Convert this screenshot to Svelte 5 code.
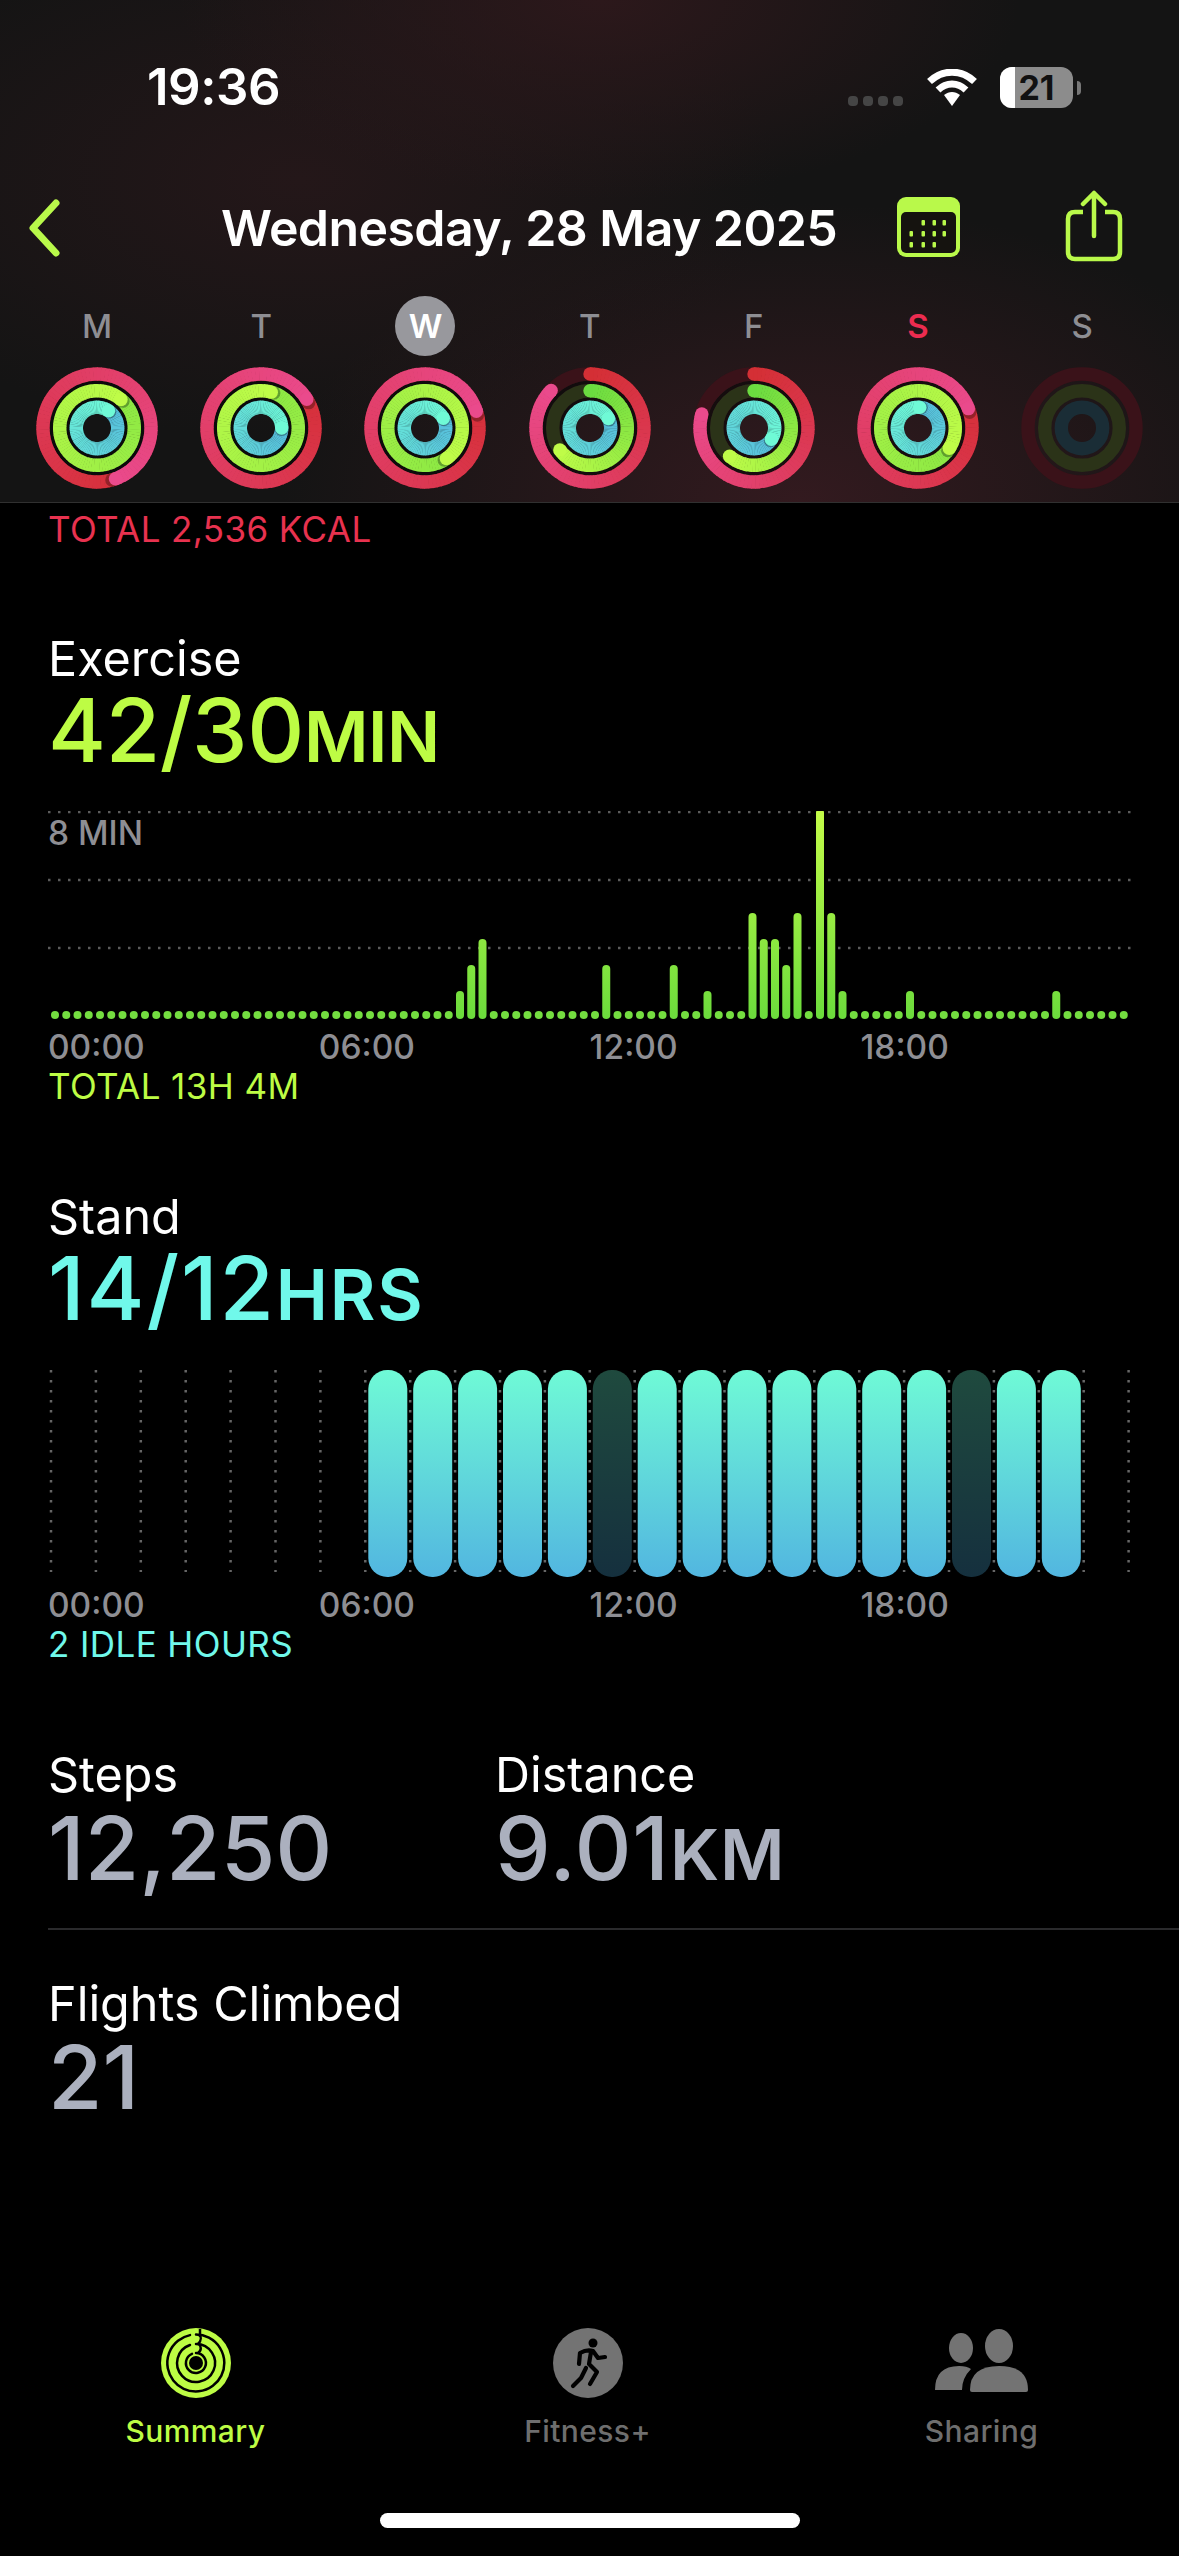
<script>
  const days = [
    { l: "M", rings: [520, 400, 394] },
    { l: "T", rings: [418, 376, 450] },
    { l: "W", rings: [432, 505, 422], today: true },
    { l: "T", rings: [314, 234, 423] },
    { l: "F", rings: [285, 221, 483] },
    { l: "S", rings: [429, 483, 365], red: true },
    { l: "S", rings: [0, 0, 0] },
  ];

  const ringDefs = [
    { r: 54, track: "#3a1219", from: [212, 47, 53], over: [214, 48, 58], to: [234, 74, 140] },
    { r: 37.3, track: "#2b3318", from: [107, 219, 64], over: [140, 232, 68], to: [191, 252, 72] },
    { r: 20.7, track: "#1a2d36", from: [86, 188, 220], over: [86, 188, 220], to: [111, 250, 214] },
  ];

  function pt(r, deg) {
    const a = ((deg - 90) * Math.PI) / 180;
    return [(r * Math.cos(a)).toFixed(2), (r * Math.sin(a)).toFixed(2)];
  }

  function mix(a, b, t) {
    return `rgb(${a.map((v, i) => Math.round(v + (b[i] - v) * t)).join(",")})`;
  }

  // angular gradient: short arcs over the last 360 degrees before the head
  function segments(def, head) {
    if (!head) return [];
    const span = Math.min(head, 360);
    const start = head - span;
    const from = head > 360 ? def.over : def.from;
    const out = [];
    const n = Math.ceil(span / 4);
    for (let i = 0; i < n; i++) {
      const a0 = start + (span * i) / n;
      const a1 = start + (span * (i + 1)) / n + (i < n - 1 ? 0.6 : 0);
      const [x0, y0] = pt(def.r, a0);
      const [x1, y1] = pt(def.r, a1);
      out.push({ d: `M${x0} ${y0}A${def.r} ${def.r} 0 0 1 ${x1} ${y1}`, c: mix(from, def.to, i / n) });
    }
    return out;
  }

  const hours = ["00:00", "06:00", "12:00", "18:00"];

  const exerciseLevels = { 36: 1, 37: 2, 38: 3, 49: 2, 55: 2, 58: 1, 62: 4, 63: 3, 64: 3, 65: 2, 66: 4, 68: 8, 69: 4, 70: 1, 76: 1, 89: 1 };
  const exercise = Array.from({ length: 96 }, (_, i) => exerciseLevels[i] || 0);

  const idle = [12, 20];
  const standLines = Array.from({ length: 25 }, (_, i) => i);
  const standHours = Array.from({ length: 16 }, (_, i) => i + 7);
  const calDots = [[26, 23], [37, 23], [47, 23], [14, 34], [26, 34], [37, 34], [47, 34], [14, 45], [26, 45], [37, 45]];
</script>

<div class="phone">
  <header class="top">
    <div class="status">
      <span class="time">19:36</span>
      <div class="status-right">
        <div class="signal"><i></i><i></i><i></i><i></i></div>
        <svg class="wifi" viewBox="0 0 50 38" width="50" height="38">
          <path d="M2.5 12.5C15.5 0 34.5 0 47.5 12.5" fill="none" stroke="#fff" stroke-width="7" />
          <path d="M11 21C19.500 13 30.500 13 39 21" fill="none" stroke="#fff" stroke-width="7" />
          <path d="M17 26C22 22 28 22 33 26L25 37Z" fill="#fff" />
        </svg>
        <div class="battery"><span class="fill"></span><span class="level">21</span></div>
        <span class="nub"></span>
      </div>
    </div>

    <nav class="nav">
      <svg class="back" viewBox="0 0 34 58" width="34" height="58">
        <path d="M29 4L6 29L29 54" fill="none" stroke="#b9f94a" stroke-width="7" stroke-linecap="round" stroke-linejoin="round" />
      </svg>
      <h1>Wednesday, 28 May 2025</h1>
      <svg class="cal" viewBox="0 0 63 60" width="63" height="60">
        <rect x="0" y="0" width="63" height="60" rx="9" fill="#b9f94a" />
        <rect x="4" y="15" width="55" height="41" rx="5" fill="#15130f" />
        {#each calDots as d}
          <rect x={d[0] - 1.500} y={d[1]} width="3.500" height="5.500" rx="1" fill="#b9f94a" />
        {/each}
      </svg>
      <svg class="share" viewBox="0 0 58 72" width="58" height="72">
        <path d="M18 22H10Q3 22 3 29V62Q3 69 10 69H48Q55 69 55 62V29Q55 22 48 22H40" fill="none" stroke="#b9f94a" stroke-width="4.500" />
        <path d="M29 46V3M18 14L29 3L40 14" fill="none" stroke="#b9f94a" stroke-width="4.500" stroke-linecap="round" stroke-linejoin="round" />
      </svg>
    </nav>

    <div class="week">
      {#each days as day}
        <div class="day">
          <span class="letter" class:today={day.today} class:red={day.red}>{day.l}</span>
          <svg viewBox="-62 -62 124 124" width="124" height="124">
            {#if day.rings[0]}
              <circle r="45.600" fill="none" stroke="#000" stroke-opacity="0.45" stroke-width="3.400" />
              <circle r="29" fill="none" stroke="#000" stroke-opacity="0.45" stroke-width="3.400" />
            {/if}
            {#each ringDefs as def, i}
              <circle r={def.r} fill="none" stroke={def.track} stroke-width="13.400" />
              {#if day.rings[i]}
                {@const segs = segments(def, day.rings[i])}
                {@const head = day.rings[i]}
                {#if head < 360}
                  <circle cx={pt(def.r, 0)[0]} cy={pt(def.r, 0)[1]} r="6.700" fill={mix(def.from, def.to, 0)} />
                {/if}
                {#each segs.slice(0, -5) as s}
                  <path d={s.d} fill="none" stroke={s.c} stroke-width="13.400" />
                {/each}
                {#if head >= 360}
                  <circle cx={pt(def.r, head + 4)[0]} cy={pt(def.r, head + 4)[1]} r="6.700" fill="#000" opacity="0.3" />
                {/if}
                {#each segs.slice(-5) as s}
                  <path d={s.d} fill="none" stroke={s.c} stroke-width="13.400" />
                {/each}
                <circle cx={pt(def.r, head)[0]} cy={pt(def.r, head)[1]} r="6.700" fill={mix(def.from, def.to, 1)} />
              {/if}
            {/each}
          </svg>
        </div>
      {/each}
    </div>
  </header>

  <main class="content">
    <p class="total kcal">TOTAL 2,536 KCAL</p>

    <section class="metric exercise">
      <h2>Exercise</h2>
      <div class="value green">42/30<small>MIN</small></div>
      <div class="chart">
        <svg class="plot" viewBox="0 0 1179 216" width="1179" height="216">
          <defs>
            <linearGradient id="exGrad" gradientUnits="userSpaceOnUse" x1="0" y1="0" x2="0" y2="208">
              <stop offset="0" stop-color="#c4fc48" />
              <stop offset="1" stop-color="#6bdb3c" />
            </linearGradient>
          </defs>
          {#each [1, 69, 137] as y}
            <line x1="48" x2="1132" y1={y} y2={y} stroke="#5c5c5c" stroke-width="2.500" stroke-dasharray="2.500 7.500" />
          {/each}
          {#each exercise as v, i}
            {#if v}
              <rect x={55 + i * 11.25 - 4} y={208 - 26 * v - 2} width="8" height={26 * v + 2} rx="4" fill="url(#exGrad)" />
            {:else}
              <circle cx={55 + i * 11.25} cy="204" r="4" fill="#74dd40" />
            {/if}
          {/each}
        </svg>
        <span class="axis-note">8 MIN</span>
      </div>
      <div class="hours">
        {#each hours as h}<span>{h}</span>{/each}
      </div>
      <p class="total lime">TOTAL 13H 4M</p>
    </section>

    <section class="metric stand">
      <h2>Stand</h2>
      <div class="value cyan">14/12<small>HRS</small></div>
      <div class="stand-chart">
        <svg viewBox="0 0 1179 208" width="1179" height="208">
          <defs>
            <linearGradient id="onGrad" x1="0" y1="0" x2="0" y2="1">
              <stop offset="0" stop-color="#6ffad6" />
              <stop offset="1" stop-color="#52b6e0" />
            </linearGradient>
            <linearGradient id="offGrad" x1="0" y1="0" x2="0" y2="1">
              <stop offset="0" stop-color="#1f4a3e" />
              <stop offset="1" stop-color="#15303e" />
            </linearGradient>
          </defs>
          {#each standLines as n}
            <line x1={51 + n * 44.9} x2={51 + n * 44.9} y1="0" y2="202" stroke="#666" stroke-width="2.500" stroke-dasharray="2.500 7.500" />
          {/each}
          {#each standHours as h}
            <rect x={51 + h * 44.9 + 3} y="0" width="39" height="207" rx="19" fill={idle.includes(h) ? "url(#offGrad)" : "url(#onGrad)"} />
          {/each}
        </svg>
      </div>
      <div class="hours">
        {#each hours as h}<span>{h}</span>{/each}
      </div>
      <p class="total aqua">2 IDLE HOURS</p>
    </section>

    <section class="stats">
      <div class="stat-row">
        <div class="stat">
          <h2>Steps</h2>
          <div class="value grey">12,250</div>
        </div>
        <div class="stat">
          <h2>Distance</h2>
          <div class="value grey dist">9.01<small>KM</small></div>
        </div>
      </div>
      <div class="stat flights">
        <h2>Flights Climbed</h2>
        <div class="value grey">21</div>
      </div>
    </section>
  </main>

  <footer class="tabbar">
    <div class="tabs">
      <div class="tab active">
        <svg viewBox="-35 -35 70 70" width="70" height="70">
          <circle r="35" fill="#bdfc44" />
          <path d="M0 -28.500A28.500 28.500 0 1 1 -6 -27.900" fill="none" stroke="#000" stroke-width="2.500" stroke-linecap="round" />
          <path d="M4 -26V-34" stroke="#000" stroke-width="2.500" />
          <path d="M0 -19A19 19 0 1 1 -6 -18" fill="none" stroke="#000" stroke-width="2.500" stroke-linecap="round" />
          <path d="M2 -19C6 -23 5 -27 3 -29" fill="none" stroke="#000" stroke-width="2.500" />
          <path d="M0 -10A10 10 0 1 1 -4 -9.200" fill="none" stroke="#000" stroke-width="2.500" stroke-linecap="round" />
          <path d="M2 -10C6 -13 5 -17 3 -19" fill="none" stroke="#000" stroke-width="2.500" />
          <circle r="7" fill="#000" />
        </svg>
        <span>Summary</span>
      </div>
      <div class="tab">
        <svg viewBox="-35 -35 70 70" width="70" height="70">
          <circle r="35" fill="#737373" />
          <circle cx="5" cy="-20" r="4.500" fill="#000" />
          <path d="M-9 1L-8 -10Q-1 -14 5 -12L10 -5L17 -6M3 -11L1 1L9 9L2 21M-2 5L-7 15L-15 23" fill="none" stroke="#000" stroke-width="4.200" stroke-linecap="round" stroke-linejoin="round" />
        </svg>
        <span>Fitness+</span>
      </div>
      <div class="tab">
        <svg class="people" viewBox="0 0 94 70" width="94" height="70">
          <ellipse cx="26" cy="20" rx="12" ry="15" fill="#737373" />
          <ellipse cx="64" cy="18" rx="14" ry="17" fill="#737373" />
          <path d="M0 62Q0 38 24 38Q32 38 36 41Q27 50 27 62Z" fill="#737373" />
          <path d="M35 62Q35 38 64 38Q93 38 93 62Q93 64 91 64H37Q35 64 35 62Z" fill="#737373" />
        </svg>
        <span>Sharing</span>
      </div>
    </div>
    <div class="home"></div>
  </footer>
</div>

<style>
  :global(body) {
    margin: 0;
    background: #000;
  }

  .phone {
    width: 1179px;
    height: 2556px;
    display: flex;
    flex-direction: column;
    overflow: hidden;
    background: #000;
    color: #fff;
    font-family: Inter, "Liberation Sans", sans-serif;
  }

  .top {
    height: 503px;
    flex: none;
    box-sizing: border-box;
    border-bottom: 1px solid #303030;
    background:
      radial-gradient(ellipse 420px 200px at 600px 0, #2c181b, transparent),
      radial-gradient(ellipse 480px 260px at 300px 180px, #241719, transparent),
      radial-gradient(ellipse 520px 300px at 800px 503px, #331a1f, transparent),
      #141414;
  }

  .status {
    height: 183px;
    display: flex;
    justify-content: space-between;
    align-items: flex-start;
    padding: 0 98px 0 147px;
  }

  .time {
    margin-top: 57px;
    font-size: 51px;
    line-height: 60px;
    font-weight: 600;
    letter-spacing: -0.5px;
  }

  .status-right {
    display: flex;
    align-items: flex-start;
    margin-top: 67px;
  }

  .signal {
    display: flex;
    gap: 5px;
    margin: 29px 24px 0 0;
  }

  .signal i {
    width: 10px;
    height: 10px;
    border-radius: 4px;
    background: #454545;
  }

  .wifi {
    margin: 2px 23px 0 0;
  }

  .battery {
    position: relative;
    width: 73px;
    height: 41px;
    border-radius: 12px;
    overflow: hidden;
    background: #8c8c8c;
    text-align: center;
    color: #111;
    font-size: 34px;
    line-height: 41px;
    font-weight: 700;
  }

  .fill {
    position: absolute;
    left: 0;
    top: 0;
    bottom: 0;
    width: 15px;
    background: #fff;
  }

  .level {
    position: relative;
  }

  .nub {
    width: 4px;
    height: 14px;
    margin: 14px 0 0 4px;
    border-radius: 0 4px 4px 0;
    background: #777;
  }

  .nav {
    height: 90px;
    position: relative;
    display: flex;
    align-items: center;
    padding-left: 27px;
  }

  .nav h1 {
    margin: 0 0 0 160px;
    font-size: 50px;
    line-height: 60px;
    font-weight: 600;
    letter-spacing: -0.6px;
    white-space: nowrap;
  }

  .cal {
    margin: 0 0 3px 60px;
  }

  .share {
    margin: 0 0 5px 105px;
  }

  .week {
    display: grid;
    grid-template-columns: repeat(7, 164.2px);
    padding: 23px 0 0 15px;
  }

  .day {
    display: flex;
    flex-direction: column;
    align-items: center;
  }

  .day svg {
    display: block;
    margin-top: 10px;
  }

  .letter {
    width: 60px;
    height: 60px;
    border-radius: 50%;
    text-align: center;
    font-size: 33px;
    line-height: 60px;
    font-weight: 500;
    color: #8e8e93;
  }

  .letter.today {
    background: #98989d;
    color: #fff;
    font-weight: 600;
  }

  .letter.red {
    color: #ec2c50;
    font-weight: 600;
  }

  .content {
    flex: 1;
    min-height: 0;
    padding-left: 48px;
  }

  .total {
    margin: 0;
    font-size: 35px;
    line-height: 42px;
    font-weight: 400;
    letter-spacing: 0.4px;
    white-space: nowrap;
  }

  .kcal {
    color: #e8324f;
    margin-top: 5px;
  }

  .lime {
    color: #bdfc44;
    margin-top: -2px;
  }

  .aqua {
    color: #70f8ea;
    margin-top: -2px;
  }

  .metric h2,
  .stat h2 {
    margin: 0;
    font-size: 48.500px;
    line-height: 60px;
    font-weight: 400;
  }

  .value {
    font-size: 88.500px;
    line-height: 82px;
    font-weight: 500;
    white-space: nowrap;
  }

  .value small {
    font-size: 70px;
    font-weight: 600;
  }

  .stat .value {
    margin-top: 2px;
  }

  .green {
    color: #bdfc44;
    letter-spacing: -0.4px;
  }

  .cyan {
    color: #70f8ea;
    letter-spacing: 1.800px;
  }

  .grey {
    color: #abb0be;
  }

  .dist {
    letter-spacing: 0.800px;
  }

  .exercise {
    margin-top: 79px;
  }

  .chart {
    position: relative;
    margin: 33px 0 0 -48px;
  }

  .plot {
    display: block;
  }

  .axis-note {
    position: absolute;
    left: 48px;
    top: 2px;
    font-size: 33.500px;
    line-height: 40px;
    font-weight: 500;
    color: #8e8e93;
  }

  .hours {
    display: grid;
    grid-template-columns: repeat(4, 270.800px);
    font-size: 33.500px;
    line-height: 40px;
    font-weight: 500;
    color: #8e8e93;
  }

  .stand {
    margin-top: 80px;
  }

  .stand-chart {
    margin: 34px 0 7px -48px;
  }

  .stand-chart svg {
    display: block;
  }

  .stats {
    margin-top: 80px;
  }

  .stat-row {
    display: flex;
    padding-bottom: 32px;
    border-bottom: 2px solid #2a2a2c;
  }

  .stat-row .stat {
    width: 447px;
  }

  .flights {
    margin-top: 44px;
  }

  .tabbar {
    height: 232px;
    flex: none;
  }

  .tabs {
    display: grid;
    grid-template-columns: 391px 393px 395px;
    height: 185px;
    padding-top: 4px;
  }

  .tab {
    display: flex;
    flex-direction: column;
    align-items: center;
    font-size: 30px;
    line-height: 36px;
    font-weight: 500;
    letter-spacing: 0.4px;
    color: #6e6e6e;
  }

  .tab svg {
    display: block;
    margin-bottom: 15px;
  }

  .tab.active {
    color: #bdfc44;
  }

  .home {
    width: 420px;
    height: 15px;
    margin: 0 auto;
    border-radius: 8px;
    background: #fff;
  }
</style>
